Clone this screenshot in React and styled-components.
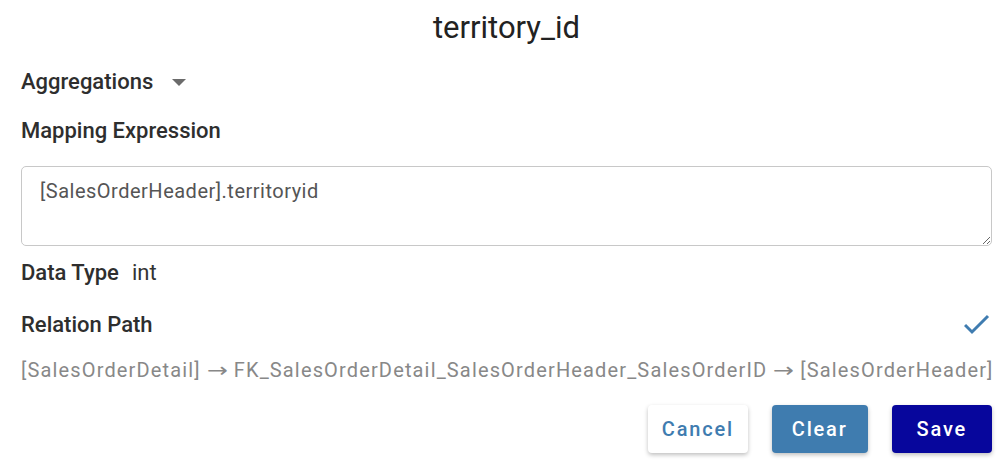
import React from 'react';
import styled, { createGlobalStyle } from 'styled-components';

const GlobalStyle = createGlobalStyle`
    body {
        margin: 0;
        background: #ffffff;
        font-family: Roboto, 'Liberation Sans', sans-serif;
        color: #222222;
    }
`

const Dialog = styled.div`
    width: 1007px;
    height: 468px;
    box-sizing: border-box;
    padding: 10px 15px 0 21px;
    display: flex;
    flex-direction: column;
`

const Title = styled.h1`
    margin: 0;
    text-align: center;
    font-size: 31px;
    font-weight: 400;
    line-height: 36px;
    color: #222222;
`

const Label = styled.div`
    font-size: 22px;
    font-weight: 500;
    line-height: 26px;
    color: #2e2e2e;
    display: flex;
    align-items: center;
    gap: ${props => props.gap || 0}px;
    margin-top: ${props => props.top || 0}px;
`

const Caret = styled.span`
    width: 0;
    height: 0;
    border-left: 7px solid transparent;
    border-right: 7px solid transparent;
    border-top: 7px solid #6b6b6b;
    margin-left: 19px;
    margin-top: 1px;
`

const Value = styled.span`
    font-weight: 400;
    color: #333333;
    font-size: 22px;
`

const TextArea = styled.textarea`
    margin-top: 22px;
    width: 100%;
    height: 80px;
    box-sizing: border-box;
    border: 1px solid #c8c8c8;
    border-radius: 5px;
    padding: 12px 18px 10px;
    font-family: Roboto, 'Liberation Sans', sans-serif;
    font-size: 20px;
    letter-spacing: 0.5px;
    color: #555555;
    resize: vertical;
    outline: none;
`

const Row = styled.div`
    display: flex;
    align-items: center;
    justify-content: space-between;
    margin-top: 26px;
`

const PathText = styled.div`
    margin-top: 20px;
    font-size: 20px;
    line-height: 24px;
    letter-spacing: 1.15px;
    color: #888888;
    white-space: nowrap;
`

const Arrow = styled.span`
    display: inline-block;
    font-family: 'DejaVu Sans', sans-serif;
    font-size: 20px;
    line-height: 20px;
    letter-spacing: 0;
    transform: scaleX(1.25);
    margin: 0 2px;
`

const Actions = styled.div`
    display: flex;
    justify-content: flex-end;
    gap: 24px;
    margin-top: 23px;
`

const Button = styled.button`
    height: 48px;
    padding: 0 ${props => props.pad || 20}px;
    border: none;
    border-radius: 4px;
    font-family: Roboto, 'Liberation Sans', sans-serif;
    font-size: 20px;
    font-weight: 500;
    letter-spacing: 1.8px;
    cursor: pointer;
    background: ${props => props.bg};
    color: ${props => props.fg};
    box-shadow: 0 2px 4px rgba(0, 0, 0, 0.25);
`

const Check = () => (
    <svg width="28" height="24" viewBox="0 0 28 24">
        <polyline points="1,12 8,19 24,3" fill="none" stroke="#3f7cb0" strokeWidth="3" />
    </svg>
)

const App = () => {
    return (
        <Dialog>
            <GlobalStyle />
            <Title>territory_id</Title>

            <Label top={23}>
                Aggregations <Caret />
            </Label>

            <Label top={23}>Mapping Expression</Label>

            <TextArea defaultValue="[SalesOrderHeader].territoryid" />

            <Label top={14} gap={13}>
                Data Type <Value>int</Value>
            </Label>

            <Row>
                <Label>Relation Path</Label>
                <Check />
            </Row>

            <PathText>
                [SalesOrderDetail] <Arrow>→</Arrow> FK_SalesOrderDetail_SalesOrderHeader_SalesOrderID <Arrow>→</Arrow> [SalesOrderHeader]
            </PathText>

            <Actions>
                <Button bg="#ffffff" fg="#3f7cb0" pad={14}>Cancel</Button>
                <Button bg="#3f7caf" fg="#ffffff" pad={20}>Clear</Button>
                <Button bg="#07069c" fg="#ffffff" pad={25}>Save</Button>
            </Actions>
        </Dialog>
    );
};

export default App;
